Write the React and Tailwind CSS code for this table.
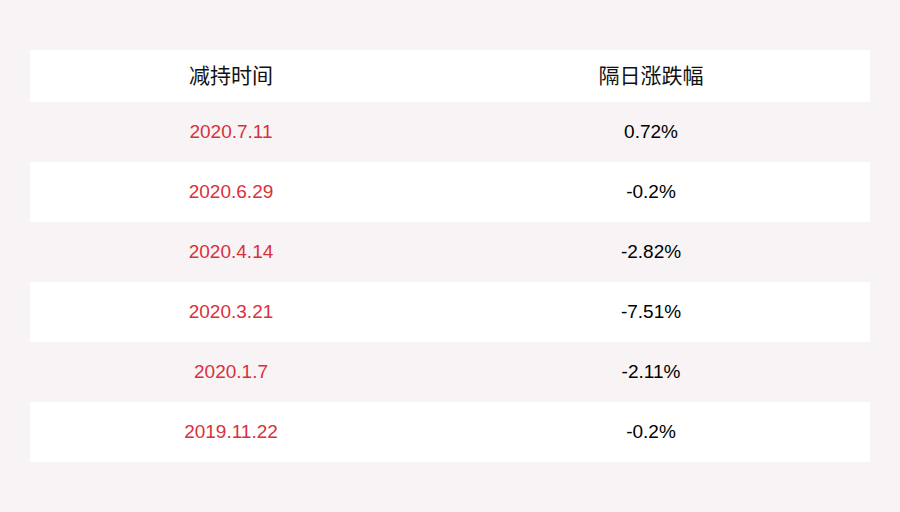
import React from 'react';

const rows = [
    { date: '2020.7.11', change: '0.72%' },
    { date: '2020.6.29', change: '-0.2%' },
    { date: '2020.4.14', change: '-2.82%' },
    { date: '2020.3.21', change: '-7.51%' },
    { date: '2020.1.7', change: '-2.11%' },
    { date: '2019.11.22', change: '-0.2%' },
];

const App = () => {
    return (
        <div
            className="w-[900px] h-[512px] bg-[#f8f4f5] px-[30px] pt-[50px]"
            style={{ fontFamily: '"Liberation Sans", "Noto Sans CJK SC", sans-serif' }}
        >
            <div className="grid grid-cols-[402px_438px] h-[52px] bg-white items-center text-[21px] text-[#111]">
                <div className="text-center">减持时间</div>
                <div className="text-center">隔日涨跌幅</div>
            </div>
            {rows.map((row, index) => (
                <div
                    key={index}
                    className={`grid grid-cols-[402px_438px] h-[60px] items-center text-[19px] ${index % 2 === 0 ? 'bg-[#f8f4f5]' : 'bg-white'}`}
                >
                    <div className="text-center text-[#d9303c]">{row.date}</div>
                    <div className="text-center text-black">{row.change}</div>
                </div>
            ))}
        </div>
    );
};

export default App;
